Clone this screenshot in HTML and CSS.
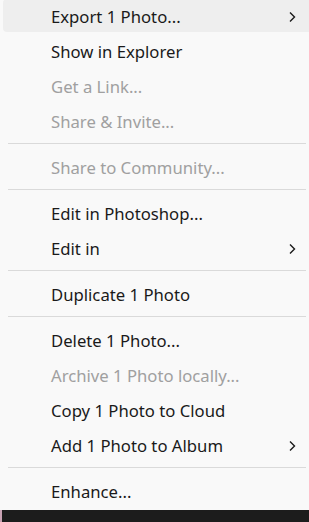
FILE: index.html
```html
<!DOCTYPE html>
<html lang="en">
<head>
<meta charset="UTF-8">
<meta name="viewport" content="width=device-width, initial-scale=1.0">
<title>Context Menu</title>
<link rel="stylesheet" href="styles.css">
</head>
<body>
<div class="menu">
    <div class="item active"><span>Export 1 Photo...</span><svg class="chevron" viewBox="0 0 8 12"><path d="M2 1.5 L6.5 6 L2 10.5"/></svg></div>
    <div class="item"><span>Show in Explorer</span></div>
    <div class="item disabled"><span>Get a Link...</span></div>
    <div class="item disabled"><span>Share &amp; Invite...</span></div>
    <div class="separator"></div>
    <div class="item disabled"><span>Share to Community...</span></div>
    <div class="separator"></div>
    <div class="item"><span>Edit in Photoshop...</span></div>
    <div class="item"><span>Edit in</span><svg class="chevron" viewBox="0 0 8 12"><path d="M2 1.5 L6.5 6 L2 10.5"/></svg></div>
    <div class="separator"></div>
    <div class="item"><span>Duplicate 1 Photo</span></div>
    <div class="separator"></div>
    <div class="item"><span>Delete 1 Photo...</span></div>
    <div class="item disabled"><span>Archive 1 Photo locally...</span></div>
    <div class="item"><span>Copy 1 Photo to Cloud</span></div>
    <div class="item"><span>Add 1 Photo to Album</span><svg class="chevron" viewBox="0 0 8 12"><path d="M2 1.5 L6.5 6 L2 10.5"/></svg></div>
    <div class="separator"></div>
    <div class="item"><span>Enhance...</span></div>
</div>
<div class="taskbar"><span class="taskbar-edge"></span></div>
</body>
</html>
```
FILE: styles.css
```css
html, body {
    height: 100%;
}
body {
    margin: 0;
    background-color: #f9f9f9;
    font-family: "Noto Sans", "Open Sans", sans-serif;
    font-size: 16.7px;
    color: #1a1a1a;
    overflow: hidden;
    display: flex;
    flex-direction: column;
}
.menu {
    flex: 1;
    margin-top: -1px;
}
.item {
    height: 35px;
    display: flex;
    align-items: center;
    padding-left: 48px;
    padding-right: 10px;
    margin-left: 3px;
    margin-right: -6px;
    border-radius: 4px;
}
.item span {
    flex: 1;
}
.item.active {
    background-color: #eeeeee;
    height: 31px;
    margin-bottom: 2px;
    padding-top: 2px;
}
.item.disabled {
    color: #a0a0a0;
}
.chevron {
    width: 8px;
    height: 12px;
    margin-right: 9px;
    fill: none;
    stroke: #1a1a1a;
    stroke-width: 1.4;
}
.separator {
    height: 1px;
    background-color: #dadada;
    margin: 4px 3px 6px 8px;
}
.taskbar {
    height: 12px;
    background-color: #1c1c1c;
    display: flex;
}
.taskbar-edge {
    width: 2px;
    background-color: #c9a3b4;
}
```
